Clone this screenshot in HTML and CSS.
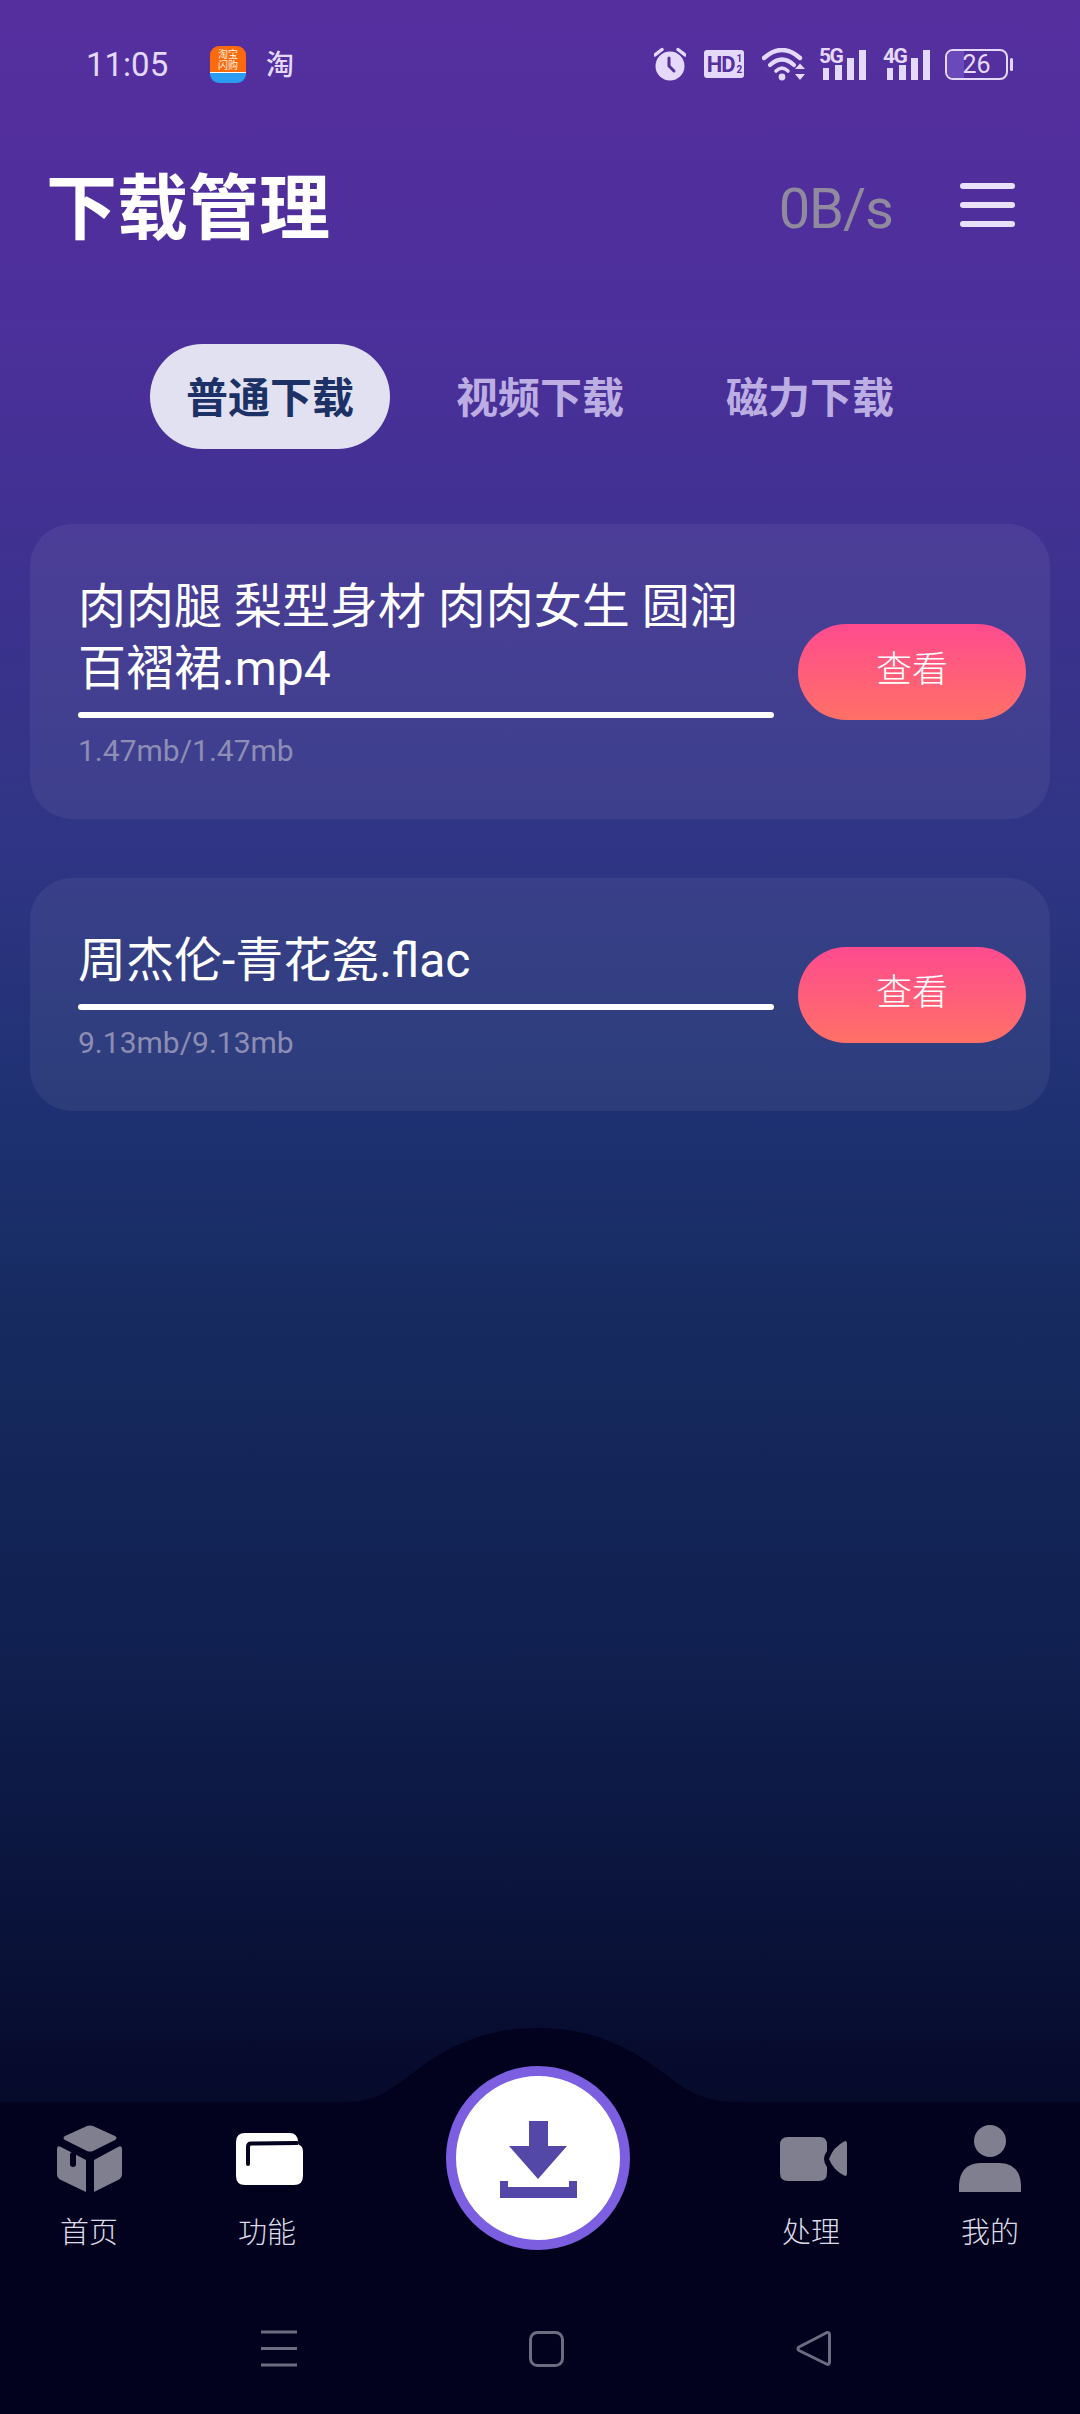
FILE: index.html
```html
<!DOCTYPE html>
<html lang="zh-CN">
<head>
  <meta charset="UTF-8">
  <title>下载管理</title>
  <link rel="stylesheet" href="styles.css">
</head>
<body>
<div class="app">
  <div class="status-bar">
    <span class="time">11:05</span>
    <div class="app-icon">
      <div class="app-icon-top">淘宝<br>闪购</div>
      <div class="app-icon-bottom"></div>
    </div>
    <span class="notif">淘</span>
    <div class="status-right">
      <svg class="ic-alarm" width="32" height="34" viewBox="0 0 32 34">
        <circle cx="16" cy="19" r="14.5" fill="#e4d9fa"/>
        <path d="M1 8 L8 2.5 M31 8 L24 2.5" stroke="#e4d9fa" stroke-width="3.4" stroke-linecap="round"/>
        <path d="M15 11 V19 L20 24" fill="none" stroke="#55309f" stroke-width="3" stroke-linecap="round"/>
      </svg>
      <div class="hd">HD<span class="hd-frac">1<br>2</span></div>
      <svg class="ic-wifi" width="44" height="33" viewBox="0 0 44 33">
        <path d="M2 10 Q20 -6 38 10" fill="none" stroke="#e4d9fa" stroke-width="4.4" stroke-linecap="round"/>
        <path d="M8 17 Q20 6 32 17" fill="none" stroke="#e4d9fa" stroke-width="4.2" stroke-linecap="round"/>
        <path d="M14 23 Q20 17 26 23" fill="none" stroke="#e4d9fa" stroke-width="3.6" stroke-linecap="round"/>
        <circle cx="20" cy="29" r="3.4" fill="#e4d9fa"/>
        <path d="M33 21 L38 15.5 L43 21 Z M33 26 L43 26 L38 32 Z" fill="#e4d9fa"/>
      </svg>
      <svg class="ic-signal" width="48" height="38" viewBox="0 -6 48 38">
        <text x="0" y="15" class="sig-text">5G</text>
        <path d="M4 20 H10 V32 H4 Z M16 17 H23 V32 H16 Z M28 10 H35 V32 H28 Z M40 2 H47 V32 H40 Z" fill="#e4d9fa"/>
      </svg>
      <svg class="ic-signal" width="48" height="38" viewBox="0 -6 48 38">
        <text x="0" y="15" class="sig-text">4G</text>
        <path d="M4 20 H10 V32 H4 Z M16 17 H23 V32 H16 Z M28 10 H35 V32 H28 Z M40 2 H47 V32 H40 Z" fill="#e4d9fa"/>
      </svg>
      <div class="battery">
        <div class="battery-body">
          <div class="battery-fill"></div>
          <span class="battery-num">26</span>
        </div>
        <div class="battery-nub"></div>
      </div>
    </div>
  </div>

  <div class="header">
    <h1 class="title">下载管理</h1>
    <span class="speed">0B/s</span>
    <div class="menu-btn"><i></i><i></i><i></i></div>
  </div>

  <div class="tabs">
    <div class="tab active">普通下载</div>
    <div class="tab">视频下载</div>
    <div class="tab">磁力下载</div>
  </div>

  <div class="list">
    <div class="card">
      <div class="card-info">
        <div class="file-name">肉肉腿 梨型身材 肉肉女生 圆润百褶裙.mp4</div>
        <div class="progress"></div>
        <div class="file-size">1.47mb/1.47mb</div>
      </div>
      <div class="view-btn">查看</div>
    </div>
    <div class="card">
      <div class="card-info">
        <div class="file-name">周杰伦-青花瓷.flac</div>
        <div class="progress"></div>
        <div class="file-size">9.13mb/9.13mb</div>
      </div>
      <div class="view-btn">查看</div>
    </div>
  </div>

  <div class="bottom">
    <svg class="hump" width="390" height="74" viewBox="0 0 390 74">
      <path d="M0 74 C26 74 42 62 62 47 C92 24 130 0 190 0 C250 0 288 24 318 47 C338 62 354 74 390 74 Z" fill="#02021f"/>
    </svg>
    <div class="fab">
      <svg width="80" height="80" viewBox="0 0 80 80">
        <path d="M31 2 H50 V27 H69 L40 60 L11 27 H31 Z M2 62 H10 V68 H71 V62 H79 V79 H2 Z" fill="#5348a8"/>
      </svg>
    </div>
    <div class="tabbar">
      <div class="tabbar-item">
        <div class="tabbar-icon">
          <svg width="65" height="67" viewBox="0 0 65 67">
            <path d="M30 1 Q33 0 36 1 L58 11 Q61 13 58 15 L36 26 Q33 27 30 26 L8 15 Q5 13 8 11 Z" fill="#7f7f90"/>
            <path d="M0 24 Q0 20 4 22 L29 35 V67 L4 55 Q0 53 0 49 Z" fill="#7f7f90"/>
            <path d="M65 24 Q65 20 61 22 L37 35 V67 L61 55 Q65 53 65 49 Z" fill="#7f7f90"/>
            <path d="M16 30 V39" stroke="#02021f" stroke-width="6" stroke-linecap="round"/>
          </svg>
        </div>
        <span class="tabbar-label">首页</span>
      </div>
      <div class="tabbar-item">
        <div class="tabbar-icon nudge">
          <svg width="67" height="52" viewBox="0 0 67 52">
            <path d="M9 0 H54 Q61 0 62 8 L63 12 Q67 13 67 19 V43 Q67 52 58 52 H9 Q0 52 0 43 V9 Q0 0 9 0 Z" fill="#fff"/>
            <path d="M61 10 L15 10.500 Q12 10.500 12 14 V31" fill="none" stroke="#02021f" stroke-width="4" stroke-linecap="round"/>
          </svg>
        </div>
        <span class="tabbar-label">功能</span>
      </div>
      <div></div>
      <div class="tabbar-item">
        <div class="tabbar-icon nudge">
          <svg width="67" height="44" viewBox="0 0 67 44">
            <path d="M8 0 H40 Q47 0 47 8 V14 Q41 22 47 30 V36 Q47 44 39 44 H8 Q0 44 0 36 V8 Q0 0 8 0 Z" fill="#7f7f90"/>
            <path d="M65 4 Q67 4 67 7 V36 Q67 39 65 39 Q53 33 49 22 Q53 10 65 4 Z" fill="#7f7f90"/>
          </svg>
        </div>
        <span class="tabbar-label">处理</span>
      </div>
      <div class="tabbar-item">
        <div class="tabbar-icon">
          <svg width="62" height="67" viewBox="0 0 62 67">
            <circle cx="31" cy="16" r="16" fill="#7f7f90"/>
            <path d="M0 67 V60 Q1 39 21 38 H41 Q61 39 62 60 V67 Z" fill="#7f7f90"/>
          </svg>
        </div>
        <span class="tabbar-label">我的</span>
      </div>
    </div>
    <div class="sys-nav">
      <svg width="36" height="37" viewBox="0 0 36 37">
        <path d="M0 2 H36 M0 18.500 H36 M0 35 H36" stroke="#6d6d82" stroke-width="3"/>
      </svg>
      <svg width="35" height="36" viewBox="0 0 35 36">
        <rect x="1.500" y="1.500" width="32" height="33" rx="7" fill="none" stroke="#6d6d82" stroke-width="3"/>
      </svg>
      <svg width="35" height="37" viewBox="0 0 35 37">
        <path d="M31 2.500 Q33.500 2 33.500 5 V32 Q33.500 35 30.500 34 L3 20.500 Q1 18.500 3 17 Z" fill="none" stroke="#6d6d82" stroke-width="3" stroke-linejoin="round"/>
      </svg>
    </div>
  </div>
</div>
</body>
</html>
```

FILE: styles.css
```css
* { box-sizing: border-box; }

html, body {
  margin: 0;
  height: 100%;
  overflow: hidden;
}

body {
  font-family: Roboto, "Noto Sans CJK SC", sans-serif;
}

.app {
  display: flex;
  flex-direction: column;
  width: 1080px;
  height: 2414px;
  color: white;
  background: linear-gradient(180deg, #562f9f 0%, #4c2f9b 13%, #2e3583 36%, #1d3070 47%, #172b61 54%, #0f1e4d 70%, #060a2b 87%);
}

/* status bar */
.status-bar {
  display: flex;
  align-items: center;
  height: 128px;
  padding: 0 67px 0 86px;
  color: #e4d9fa;
}

.time {
  font-size: 33px;
  width: 124px;
}

.app-icon {
  display: flex;
  flex-direction: column;
  width: 36px;
  height: 37px;
  border-radius: 9px;
  overflow: hidden;
}

.app-icon-top {
  height: 27px;
  background: #fb6a0c;
  color: #fff3e0;
  font-size: 10px;
  line-height: 11px;
  text-align: center;
  padding-top: 3px;
  border-bottom: 1px solid #fff;
}

.app-icon-bottom {
  flex: 1;
  background: #2a9cf2;
}

.notif {
  margin: -2px 0 0 20px;
  font-size: 28px;
  font-weight: 500;
}

.status-right {
  display: flex;
  align-items: center;
  margin-left: auto;
  gap: 16px;
}

.ic-alarm { margin-right: 2px; }

.hd {
  display: flex;
  align-items: center;
  justify-content: center;
  width: 40px;
  height: 28px;
  margin-right: 2px;
  border-radius: 3px;
  background: #e4d9fa;
  color: #55309f;
  font-size: 22px;
  font-weight: 700;
  letter-spacing: -1px;
}

.hd-frac {
  font-size: 10px;
  line-height: 11px;
  margin-left: 2px;
  text-align: center;
}

.ic-wifi { margin-right: -3px; }

.ic-signal { margin-top: -6px; }

.sig-text {
  font-family: Roboto, sans-serif;
  font-size: 21px;
  font-weight: 700;
  fill: #e4d9fa;
  letter-spacing: -1.5px;
}

.battery {
  display: flex;
  align-items: center;
  gap: 2px;
  margin-left: -2px;
}

.battery-body {
  position: relative;
  display: flex;
  align-items: center;
  justify-content: center;
  width: 63px;
  height: 31px;
  border: 2px solid #e4d9fa;
  border-radius: 8px;
  overflow: hidden;
}

.battery-fill {
  position: absolute;
  top: 0;
  left: 0;
  bottom: 0;
  width: 17px;
  background: #6a4ab8;
}

.battery-num {
  position: relative;
  font-size: 25px;
}

.battery-nub {
  width: 3px;
  height: 13px;
  border-radius: 2px;
  background: #e4d9fa;
}

/* header */
.header {
  display: flex;
  align-items: center;
  height: 162px;
  padding: 0 65px 0 46px;
}

.title {
  margin: 0;
  font-size: 71px;
  font-weight: 700;
  line-height: 1.2;
}

.speed {
  margin-left: auto;
  font-size: 56px;
  letter-spacing: -1px;
  color: #8f8a9e;
}

.menu-btn {
  display: flex;
  flex-direction: column;
  gap: 13px;
  width: 55px;
  margin: 0 0 8px 67px;
}

.menu-btn i {
  display: block;
  height: 6px;
  border-radius: 3px;
  background: #e9e0fb;
}

/* tabs */
.tabs {
  display: flex;
  justify-content: center;
  gap: 30px;
  margin-top: 54px;
}

.tab {
  width: 240px;
  height: 105px;
  border-radius: 53px;
  font-size: 42px;
  font-weight: 700;
  line-height: 109px;
  text-align: center;
  color: #bcaee2;
}

.tab.active {
  background: #e2e1f1;
  color: #1c3266;
}

/* download cards */
.list {
  display: flex;
  flex-direction: column;
  gap: 59px;
  margin-top: 75px;
  padding: 0 30px;
}

.card {
  display: flex;
  align-items: center;
  gap: 24px;
  padding: 52px 24px 48px 48px;
  border-radius: 42px;
  background: rgba(255, 255, 255, 0.06);
}

.card-info {
  width: 696px;
}

.file-name {
  font-size: 48px;
  line-height: 62px;
}

.progress {
  height: 6px;
  margin-top: 12px;
  border-radius: 3px;
  background: #fff;
}

.file-size {
  margin-top: 13px;
  font-size: 30px;
  line-height: 40px;
  color: #8e8db4;
}

.view-btn {
  width: 228px;
  height: 96px;
  margin-bottom: 4px;
  border-radius: 48px;
  font-size: 36px;
  font-weight: 300;
  line-height: 92px;
  text-align: center;
  background: linear-gradient(180deg, #ff4b8f 0%, #ff7066 100%);
}

/* bottom bar */
.bottom {
  position: relative;
  display: flex;
  flex-direction: column;
  height: 312px;
  margin-top: auto;
  background: #02021f;
}

.hump {
  position: absolute;
  top: -74px;
  left: 348px;
}

.fab {
  position: absolute;
  top: -36px;
  left: 446px;
  display: flex;
  align-items: center;
  justify-content: center;
  width: 184px;
  height: 184px;
  padding-top: 2px;
  border: 10px solid #7b5fe0;
  border-radius: 50%;
  background: #fff;
}

.tabbar {
  display: grid;
  grid-template-columns: 178px 178px 1fr 178px 180px;
  padding-top: 23px;
}

.tabbar-item {
  display: flex;
  flex-direction: column;
  align-items: center;
}

.tabbar-icon {
  display: flex;
  align-items: center;
  justify-content: center;
  height: 67px;
}

.tabbar-icon.nudge { margin-left: 5px; }

.tabbar-label {
  margin-top: 21px;
  font-size: 29px;
  font-weight: 300;
  line-height: 40px;
  color: #dcdce8;
}

.sys-nav {
  display: flex;
  align-items: center;
  gap: 232px;
  margin-top: 77px;
  padding-left: 261px;
}
```
